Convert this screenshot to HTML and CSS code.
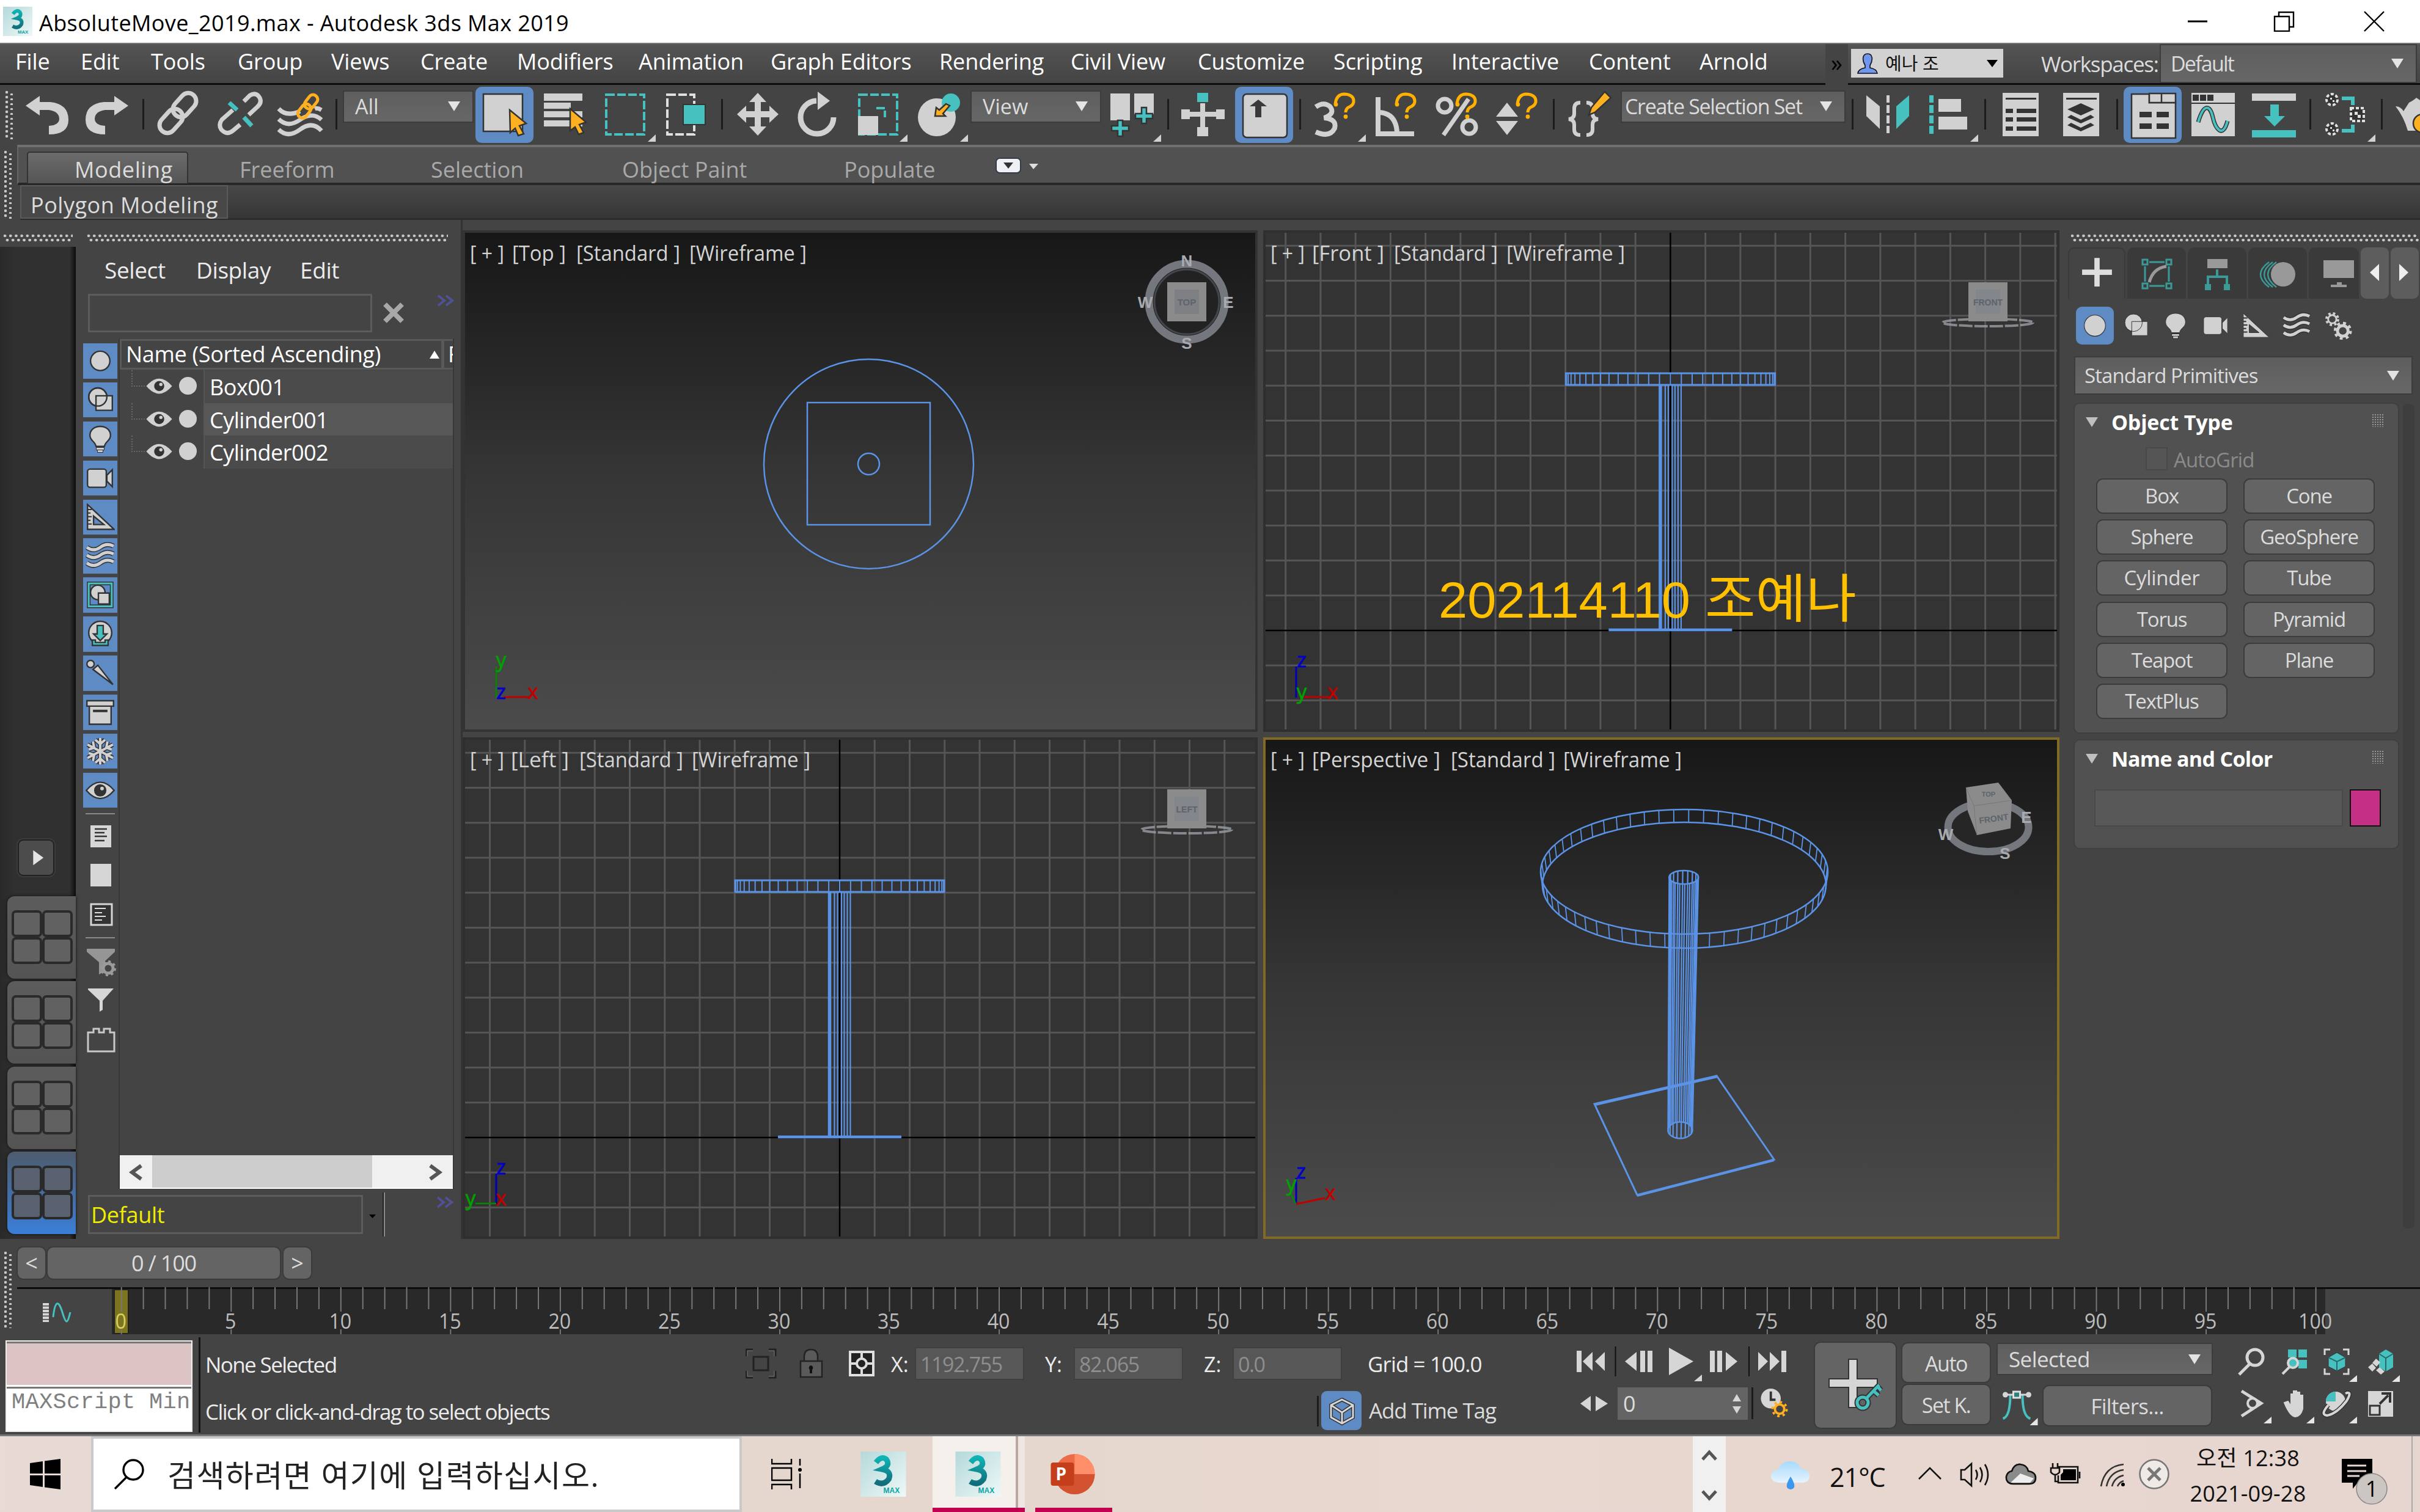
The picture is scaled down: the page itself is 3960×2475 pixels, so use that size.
FILE: index.html
```html
<!DOCTYPE html>
<html lang="ko">
<head>
<meta charset="utf-8">
<title>AbsoluteMove_2019.max - Autodesk 3ds Max 2019</title>
<link rel="stylesheet" href="styles.css">
</head>
<body>
<svg class="defs" aria-hidden="true">
  <defs>
    <linearGradient id="gTeal" x1="0" y1="0" x2="0" y2="1"><stop offset="0" stop-color="#0fb3b3"/><stop offset="1" stop-color="#126e7c"/></linearGradient>
    <linearGradient id="gTile" x1="0" y1="0" x2="1" y2="1"><stop offset="0" stop-color="#b5d9da"/><stop offset="1" stop-color="#eef8f8"/></linearGradient>
    <linearGradient id="gView" x1="0" y1="0" x2="0" y2="1"><stop offset="0" stop-color="#171717"/><stop offset=".5" stop-color="#363636"/><stop offset="1" stop-color="#4b4b4b"/></linearGradient>
    <linearGradient id="gCloud" x1="0" y1="0" x2="0" y2="1"><stop offset="0" stop-color="#a6dafd"/><stop offset="1" stop-color="#e6f4ff"/></linearGradient>
  </defs>
  <symbol id="max" viewBox="0 0 74 74"><rect width="74" height="74" fill="url(#gTile)"/><path d="M25 18Q34 6 42 13Q49 23 35 29Q51 32 46 45Q37 57 24 49" fill="none" stroke="url(#gTeal)" stroke-width="9"/><text x="37" y="68" font-family="Liberation Sans, sans-serif" font-weight="700" font-size="12" fill="#0fa3a3">MAX</text></symbol>
  <symbol id="ball" viewBox="0 0 48 48"><circle cx="24" cy="24" r="16"/></symbol>
  <symbol id="shapes" viewBox="0 0 48 48"><circle cx="20" cy="19" r="15"/><path d="M17 17h27v24h-27z"/><circle cx="20" cy="19" r="15" fill="none"/></symbol>
  <symbol id="bulb" viewBox="0 0 48 48"><path d="M24 3C13 3 7 10 7 18C7 27 16 28 17 36H31C32 28 41 27 41 18C41 10 35 3 24 3Z"/><path d="M17 39h14M19 43h10" stroke="#333" stroke-width="7"/><path d="M18 40h12M20 44h8" stroke="#d1d1d1" stroke-width="3"/></symbol>
  <symbol id="cam" viewBox="0 0 48 48"><rect x="3" y="9" width="31" height="30" rx="4"/><path d="M35 19L44 10V38L35 29Z"/></symbol>
  <symbol id="tri" viewBox="0 0 48 48"><path fill-rule="evenodd" d="M3 3L47 44H3ZM13 22V36H30Z"/><path d="M3 11h7M3 17h5M3 23h7M3 29h5M3 35h7" stroke="#333" stroke-width="2"/></symbol>
  <symbol id="waves" viewBox="0 0 48 48"><path d="M2 10Q13 18 24 10T46 8M2 23Q13 31 24 23T46 21M2 36Q13 44 24 36T46 34" fill="none" stroke="#333" stroke-width="8"/><path d="M2 10Q13 18 24 10T46 8M2 23Q13 31 24 23T46 21M2 36Q13 44 24 36T46 34" fill="none" stroke="#d1d1d1" stroke-width="5"/></symbol>
  <symbol id="group" viewBox="0 0 48 48"><path d="M5 5h38v38H5z" fill="none" stroke="#333" stroke-width="6"/><path d="M5 5h38v38H5z" fill="none" stroke="#47c1bf" stroke-width="3"/><circle cx="20" cy="20" r="12"/><path d="M21 21h18v18H21z"/></symbol>
  <symbol id="xref" viewBox="0 0 48 48"><circle cx="24" cy="22" r="19"/><path d="M19 10h10v14h6L24 35L13 24h6z" fill="#47c1bf"/><path d="M11 34v9h26v-9h-5v4H16v-4z" fill="#47c1bf"/></symbol>
  <symbol id="bone" viewBox="0 0 48 48"><circle cx="8" cy="9" r="6"/><path d="M12 18L20 11L45 43Z"/></symbol>
  <symbol id="box" viewBox="0 0 48 48"><path d="M6 13h36v31H6z"/><path d="M2 5h44v9H2z"/><path d="M12 22h24" stroke-width="4"/></symbol>
  <symbol id="flake" viewBox="0 0 48 48"><path d="M24 2V46M16 5L24 12L32 5M16 43L24 36L32 43M3 13L45 35M5 21L14 18L12 8M43 27L34 30L36 40M45 13L3 35M43 21L34 18L36 8M5 27L14 30L12 40" fill="none" stroke="#333" stroke-width="7"/><path d="M24 2V46M16 5L24 12L32 5M16 43L24 36L32 43M3 13L45 35M5 21L14 18L12 8M43 27L34 30L36 40M45 13L3 35M43 21L34 18L36 8M5 27L14 30L12 40" fill="none" stroke="#d1d1d1" stroke-width="4"/></symbol>
  <symbol id="eye" viewBox="0 0 48 48"><path d="M1 24Q24 -3 47 24Q24 51 1 24Z"/><circle cx="24" cy="24" r="9" fill="#333"/><circle cx="27" cy="21" r="3" fill="#d1d1d1" stroke="none"/></symbol>
  <symbol id="layout" viewBox="0 0 112 135"><rect x="9" y="25" width="46" height="40" rx="5"/><rect x="59" y="25" width="46" height="40" rx="5"/><rect x="9" y="69" width="46" height="40" rx="5"/><rect x="59" y="69" width="46" height="40" rx="5"/></symbol>
  <symbol id="mag" viewBox="0 0 50 50"><circle cx="32" cy="18" r="16" fill="none"/><path d="M21 30L2 49"/></symbol>
  <symbol id="q" viewBox="0 0 40 44"><path d="M3 19Q5 3 18 3Q34 4 33 16Q32 22 24 25Q20 28 20 33" fill="none" stroke="#ffb000" stroke-width="5"/><circle cx="20" cy="40" r="3.4" fill="#ffb000"/><circle cx="4" cy="20" r="3.4" fill="#ffb000"/></symbol>
</svg>

<header class="titlebar">
  <svg class="app-icon"><use href="#max"/></svg>
  <h1>AbsoluteMove_2019.max - Autodesk 3ds Max 2019</h1>
  <svg class="win-controls" viewBox="0 0 340 34" fill="none" stroke="#000" stroke-width="2.4"><path d="M2 17H34" stroke-width="3"/><path d="M144 9H168V33H144ZM151 9V2H175V26H168M291 1L323 33M323 1L291 33"/></svg>
</header>

<div class="menubar">
  <nav class="menus"><span>File</span><span>Edit</span><span>Tools</span><span>Group</span><span>Views</span><span>Create</span><span>Modifiers</span><span>Animation</span><span>Graph Editors</span><span>Rendering</span><span>Civil View</span><span>Customize</span><span>Scripting</span><span>Interactive</span><span>Content</span><span>Arnold</span></nav>
  <div class="more">»</div>
  <div class="account">
    <div class="user"><svg viewBox="0 0 34 34" class="person"><path d="M17 1C8 1 8 12 13 20L13 24Q2 26 1 33H33Q32 26 21 24L21 20C26 12 26 1 17 1Z" fill="#6f97ee" stroke="#111" stroke-width="1.6"/></svg><span>예나 조</span><i class="caret black"></i></div>
    <span class="ws-label">Workspaces:</span>
    <div class="dd workspace"><span>Default</span><i class="caret"></i></div>
  </div>
</div>

<div class="toolbar">
  <i class="grip-v"></i>
  <svg class="ic"><path d="M0 31L23 15V25H40Q70 28 70 54Q70 78 38 78V64Q55 63 55 52Q54 40 38 38H23V47Z"/></svg>
  <svg class="ic"><path d="M70 31L47 15V25H30Q0 28 0 54Q0 78 32 78V64Q15 63 15 52Q16 40 32 38H47V47Z"/></svg>
  <i class="sep"></i>
  <svg class="ic"><g class="ln"><rect x="33" y="8" width="26" height="44" rx="13" transform="rotate(42 46 30)"/><rect x="11" y="34" width="26" height="44" rx="13" transform="rotate(42 24 56)"/></g></svg>
  <svg class="ic"><g class="ln"><path d="M44 24L54 14Q64 8 70 18Q74 26 66 33L52 46M26 38L8 54Q2 62 7 70Q16 80 26 72L38 62"/><path class="teal-l" d="M20 26L33 38M44 50L57 64"/></g></svg>
  <svg class="ic"><g class="ln"><path d="M1 36Q14 50 36 40M1 53Q16 68 36 54T71 54M1 70Q16 85 36 70T71 72M60 36Q64 34 71 38"/><g class="or-l"><rect x="47" y="12" width="15" height="25" rx="7" transform="rotate(38 54 24)"/><rect x="36" y="27" width="15" height="25" rx="7" transform="rotate(38 43 39)"/></g></g></svg>
  <i class="sep"></i>
  <div class="dd"><span>All</span><i class="caret"></i></div>
  <div class="on"><svg class="ic"><rect x="13" y="12" width="64" height="61" class="ol"/><path class="or ol" d="M56 38L83 60L72 64L79 77L70 80L65 68L57 75Z"/></svg></div>
  <svg class="ic"><path d="M2 11h63v12H2zM2 26h44v10H2zM2 40h63v10H2zM2 55h63v10H2z"/><path class="or ol" d="M45 36L71 58L60 62L67 75L59 78L53 66L45 72Z"/></svg>
  <svg class="ic"><path class="teal-d" d="M2 13H64V78H2Z"/><path d="M70 90h13V78z"/></svg>
  <svg class="ic"><path class="wh-d" d="M2 13H46V78H2Z"/><path class="teal" d="M28 29h36v33H28z" stroke="#333" stroke-width="2"/></svg>
  <i class="sep"></i>
  <svg class="ic"><path d="M35 10L49 25H40V40H54V31L69 45L54 59V50H40V65H49L35 80L21 65H30V50H16V59L1 45L16 31V40H30V25H21Z"/></svg>
  <svg class="ic"><path d="M62 50A27 27 0 1 1 34 23" fill="none" stroke="#d1d1d1" stroke-width="9"/><path d="M36 8L56 23L36 38Z"/></svg>
  <svg class="ic"><path class="teal-d" d="M2 13H64V78H2Z"/><path d="M0 48h33v31H0z"/><path class="teal-d" d="M30 35H44V50" stroke-dasharray="none"/><path d="M68 90h13V78z"/></svg>
  <svg class="ic"><circle cx="32" cy="50" r="31"/><circle cx="55" cy="26" r="15" class="teal"/><path class="or ol" d="M47 28L53 31L42 44L46 48H29L31 34L36 38Z"/><path d="M70 90h13V78z"/></svg>
  <div class="dd"><span>View</span><i class="caret"></i></div>
  <svg class="ic"><path d="M1 11h32v44H1zM40 11h32v34H40z"/><path class="teal ol" d="M52 34h8v10h10v8H60v8h-8v-8H42v-8h10zM13 55h8v9h10v8H21v9h-8v-9H3v-8h10z"/><path d="M71 90h13V78z"/></svg>
  <i class="sep"></i>
  <svg class="ic"><path class="teal" d="M26 10h18v15H26z"/><path d="M31 27h8v14h18v-4h14v16H57v-4H39v17h5v15H26V66h5V49H14v4H0V37h14v4h17z"/></svg>
  <div class="on"><svg class="ic"><rect x="13" y="12" width="72" height="71" rx="6" class="ol"/><path d="M38 21L52 32H43V50H33V32H24Z" fill="#3a3a3a"/></svg></div>
  <i class="sep"></i>
  <svg class="ic"><path d="M3 33Q16 24 26 32Q36 44 17 51Q38 53 34 68Q26 84 3 74" fill="none" stroke="#d1d1d1" stroke-width="8"/><use href="#q" x="32" y="9" width="40" height="44"/><path d="M72 90h13V78z"/></svg>
  <svg class="ic"><path d="M5 17V77H64M8 42Q34 44 36 74" fill="none" stroke="#d1d1d1" stroke-width="8"/><use href="#q" x="32" y="9" width="40" height="44"/></svg>
  <svg class="ic"><g fill="none" stroke="#d1d1d1" stroke-width="7"><circle cx="15" cy="31" r="11"/><circle cx="55" cy="66" r="11"/><path d="M54 20L13 79"/></g><use href="#q" x="32" y="9" width="40" height="44"/></svg>
  <svg class="ic"><path d="M18 26L36 49H0ZM18 79L36 56H0Z"/><use href="#q" x="32" y="9" width="40" height="44"/></svg>
  <i class="sep"></i>
  <svg class="ic"><g fill="none" stroke="#d1d1d1" stroke-width="6"><path d="M20 26Q10 26 10 36V44Q10 52 1 53Q10 54 10 62V70Q10 79 20 79M30 26Q40 26 40 36V44Q40 52 49 53Q40 54 40 62V70Q40 79 30 79"/></g><path class="or ol" d="M60 8L70 18L44 42L34 46L38 34Z"/></svg>
  <div class="dd wide"><span>Create Selection Set</span><i class="caret"></i></div>
  <i class="sep"></i>
  <svg class="ic"><path d="M1 14L23 32V69L1 48Z"/><path class="teal" d="M71 14L50 32V69L71 48Z"/><path d="M34 14h5v12h-5zM34 30h5v13h-5zM34 47h5v13h-5zM34 64h5v12h-5z"/></svg>
  <svg class="ic"><path class="teal" d="M1 14h7v12H1zM1 30h7v13H1zM1 47h7v13H1zM1 64h7v13H1z"/><path d="M16 20h37v21H16zM16 49h47v21H16z"/><path d="M68 90h13V78z"/></svg>
  <i class="sep"></i>
  <svg class="ic"><rect x="1" y="10" width="59" height="71"/><path class="dk" d="M6 18h50v3H6zM6 36h12v7H6zM24 36h32v7H24zM6 50h12v7H6zM24 50h32v7H24zM6 65h12v7H6zM24 65h32v7H24z"/></svg>
  <svg class="ic"><rect x="1" y="10" width="59" height="71"/><path class="dk" d="M6 18h50v3H6zM30 27L52 37L30 47L8 37ZM8 50L14 46L30 54L46 46L52 50L30 60ZM8 63L14 59L30 67L46 59L52 63L30 73Z"/></svg>
  <i class="sep"></i>
  <div class="on"><svg class="ic"><path d="M13 12H42V26H85V84H13Z" class="ol"/><path d="M42 11H85V26H42ZM62 11V26" class="ol"/><path class="dk" d="M26 41h20v9H26zM54 41h20v9H54zM26 60h20v9H26zM54 60h20v9H54z"/></svg></div>
  <svg class="ic"><rect x="1" y="10" width="71" height="71"/><path class="dk" d="M3 13h10v10H3zM15 13h10v10H15zM27 13h10v10H27zM1 26h71v2H1z"/><path d="M12 58C22 24 32 32 36 50S52 86 60 56" fill="none" stroke="#333" stroke-width="7"/><path d="M12 58C22 24 32 32 36 50S52 86 60 56" fill="none" stroke="#47c1bf" stroke-width="4"/></svg>
  <svg class="ic"><path d="M0 11h72v12H0z"/><path class="teal" d="M30 29h14v19h10L37 65L20 48h10zM0 71h72v12H0z"/></svg>
  <i class="sep"></i>
  <svg class="ic"><g fill="#333" stroke="#e0e0e0" stroke-width="4" stroke-dasharray="5 3"><circle cx="12" cy="21" r="9"/><circle cx="12" cy="69" r="9"/><rect x="43" y="35" width="21" height="21"/></g><path d="M9 18h3v3H9zM13 22h3v3h-3zM9 66h3v3H9zM13 70h3v3h-3zM49 41h5v5h-5zM54 46h5v5h-5z" fill="#e0e0e0"/><path d="M28 19H46V30M28 72H46V62" fill="none" stroke="#47c1bf" stroke-width="6"/><path d="M70 90h13V78z"/></svg>
  <i class="sep"></i>
  <svg class="ic clip"><path d="M0 32Q8 32 13 40L22 26Q30 22 34 18L40 22V72H20Q14 50 0 32Z"/><circle cx="44" cy="60" r="15" class="or ol"/></svg>
</div>

<div class="ribbon">
  <i class="grip-v"></i>
  <div class="ribbon-body">
    <div class="tabs"><span class="active">Modeling</span><span>Freeform</span><span>Selection</span><span>Object Paint</span><span>Populate</span><svg viewBox="0 0 80 30"><rect x="1" y="1" width="40" height="24" rx="6" fill="#eef0f6" stroke="#333a48" stroke-width="2"/><path d="M13 8H29L21 18Z" fill="#333"/><path d="M55 10H70L62 19Z" fill="#ddd"/></svg></div>
    <div class="panel"><span>Polygon Modeling</span></div>
  </div>
</div>

<main class="work">
  <aside class="layouts">
    <i class="grip-h"></i>
    <div class="strip">
      <button class="play"><svg viewBox="0 0 60 60"><path d="M25 17L43 30L25 43Z" fill="#e4e4e4"/></svg></button>
      <svg class="cell"><use href="#layout"/></svg><svg class="cell"><use href="#layout"/></svg><svg class="cell"><use href="#layout"/></svg><svg class="cell current"><use href="#layout"/></svg>
    </div>
  </aside>

  <section class="explorer">
    <i class="grip-h"></i>
    <nav><span>Select</span><span>Display</span><span>Edit</span></nav>
    <div class="search"><div class="field"></div><svg class="clear" viewBox="0 0 36 36"><path d="M4 4L32 32M32 4L4 32" stroke="#a8a8a8" stroke-width="8"/></svg><svg class="chev" viewBox="0 0 28 20"><path d="M2 2L12 10L2 18M15 2L25 10L15 18"/></svg></div>
    <div class="tree">
      <div class="filters">
        <svg class="f"><use href="#ball"/></svg><svg class="f"><use href="#shapes"/></svg><svg class="f"><use href="#bulb"/></svg><svg class="f"><use href="#cam"/></svg><svg class="f"><use href="#tri"/></svg><svg class="f"><use href="#waves"/></svg><svg class="f"><use href="#group"/></svg><svg class="f"><use href="#xref"/></svg><svg class="f"><use href="#bone"/></svg><svg class="f"><use href="#box"/></svg><svg class="f"><use href="#flake"/></svg><svg class="f"><use href="#eye"/></svg>
        <svg class="extra" viewBox="0 0 56 400"><path d="M4 9H52M4 212H52" stroke="#8a8a8a" stroke-width="2"/><path d="M12 28h34v36H12zM12 91h34v37H12z" fill="#d6d6d6"/><path d="M19 34h20M19 40h16M19 46h20M19 53h16" stroke="#333" stroke-width="2.4"/><path d="M13 157h34v34H13z" fill="#333" stroke="#d6d6d6" stroke-width="3"/><path d="M19 164h18M19 171h12M19 177h18M19 183h12" stroke="#ddd" stroke-width="2"/><path d="M6 230H52V235L34 252V268L26 272V252L6 235Z" fill="#959595"/><circle cx="41" cy="262" r="8" fill="#444" stroke="#9a9a9a" stroke-width="5"/><circle cx="41" cy="262" r="11" fill="none" stroke="#9a9a9a" stroke-width="4" stroke-dasharray="4 4.6"/><path d="M8 295H50L32 315V330L27 333V315L8 297Z" fill="#d6d6d6"/><path d="M8 398V367H17V361H26V367H34V361H44V367H51V398Z" fill="none" stroke="#c8c8c8" stroke-width="3"/></svg>
      </div>
      <div class="list">
        <div class="head"><span>Name (Sorted Ascending)</span><b></b><em>F</em></div>
        <div class="row"><i></i><svg class="eye"><use href="#eye"/></svg><u></u><span>Box001</span></div>
        <div class="row alt"><i></i><svg class="eye"><use href="#eye"/></svg><u></u><span>Cylinder001</span></div>
        <div class="row"><i></i><svg class="eye"><use href="#eye"/></svg><u></u><span>Cylinder002</span></div>
        <div class="hscroll"><svg viewBox="0 0 53 54"><path d="M35 17L20 28L35 39" /></svg><div></div><svg viewBox="0 0 53 54"><path d="M16 17L31 28L16 39"/></svg></div>
      </div>
    </div>
    <div class="preset"><div class="field">Default</div><svg viewBox="0 0 148 72"><path d="M10 36H21L15.500 42Z" fill="#000"/><path d="M35 0V72" stroke="#8a8a8a" stroke-width="2"/><path d="M33 0V72" stroke="#222" stroke-width="2"/><g fill="none" stroke="#4f5192" stroke-width="4"><path d="M122 8L132 16L122 24M135 8L145 16L135 24"/></g></svg></div>
  </section>

  <section class="views">
    <svg id="vTop" viewBox="757 377 1303 821"></svg>
    <svg id="vFront" viewBox="2067 377 1303 821"></svg>
    <svg id="vLeft" viewBox="757 1207 1303 821"></svg>
    <svg id="vPersp" viewBox="2067 1207 1303 821"></svg>
  </section>

  <aside class="command">
    <i class="grip-h"></i>
    <div class="ctabs">
      <svg viewBox="0 0 94 84" class="active"><path d="M43 15h9v20h21v9H52v20h-9V44H22v-9h21z" fill="#dedede"/></svg>
      <svg viewBox="0 0 96 84"><g fill="none" stroke="#3b9a98" stroke-width="3"><path d="M25 20h8v8h-8zM64 20h8v8h-8zM25 59h8v8h-8zM64 59h8v8h-8zM36 24H61M36 63H61M29 31V56M68 31V56"/></g><path d="M36 57Q42 34 64 31" fill="none" stroke="#999" stroke-width="5"/></svg>
      <svg viewBox="0 0 96 84"><path d="M32 19h33v15H32z" fill="#999"/><path d="M28 60h10v10H28zM59 60h10v10H59z" fill="#3b9a98" /><path d="M48 36V46M33 60V48H64V60" fill="none" stroke="#3b9a98" stroke-width="4"/></svg>
      <svg viewBox="0 0 96 84"><g fill="none" stroke="#3b9a98" stroke-width="2.500"><path d="M34 24Q6 44 34 65M40 24Q12 44 40 65M46 24Q18 44 46 65"/></g><circle cx="57" cy="44" r="20" fill="#999"/></svg>
      <svg viewBox="0 0 82 84"><path d="M24 21h50v29H24zM46 57h8v4h8v4H36v-4h10z" fill="#999"/></svg>
      <svg viewBox="0 0 46 84" class="arr"><path d="M30 27V55L15 41Z" fill="#eee"/></svg>
      <svg viewBox="0 0 46 84" class="arr"><path d="M14 27V55L29 41Z" fill="#eee"/></svg>
    </div>
    <div class="cats"><svg class="on"><use href="#ball"/></svg><svg><use href="#shapes"/></svg><svg><use href="#bulb"/></svg><svg><use href="#cam"/></svg><svg><use href="#tri"/></svg><svg><use href="#waves"/></svg><svg viewBox="0 0 48 48"><g fill="none" stroke="#d1d1d1"><circle cx="14" cy="13" r="7" stroke-width="3"/><circle cx="14" cy="13" r="10" stroke-width="4" stroke-dasharray="4 4"/><circle cx="32" cy="33" r="9" stroke-width="5"/><circle cx="32" cy="33" r="13" stroke-width="5" stroke-dasharray="5 5.200"/></g></svg></div>
    <div class="dd prim"><span>Standard Primitives</span><i class="caret"></i></div>
    <div class="rollouts">
      <div class="stack">
        <div class="rollout">
          <h2><i class="caret"></i>Object Type<b></b></h2>
          <label><i></i>AutoGrid</label>
          <div class="prims"><button>Box</button><button>Cone</button><button>Sphere</button><button>GeoSphere</button><button class="loose">Cylinder</button><button>Tube</button><button>Torus</button><button>Pyramid</button><button>Teapot</button><button>Plane</button><button>TextPlus</button></div>
        </div>
        <div class="rollout second">
          <h2><i class="caret"></i>Name and Color<b></b></h2>
          <div class="name-row"><div></div><i></i></div>
        </div>
      </div>
      <div class="vbar"></div>
    </div>
  </aside>
</main>

<section class="time">
  <i class="grip-v"></i>
  <div class="time-body">
    <div class="slider"><button>&lt;</button><button class="knob">0 / 100</button><button>&gt;</button></div>
    <div class="track">
      <svg class="curve" viewBox="0 0 155 76"><path d="M47 23V54" stroke="#d6d6d6" stroke-width="10" stroke-dasharray="4 1.500"/><path d="M59 46C62 18 68 18 74 38S82 58 87 38" fill="none" stroke="#47c1bf" stroke-width="3"/></svg>
      <svg id="ticks" viewBox="183 2107 3777 77"></svg>
    </div>
  </div>
</section>

<footer class="status">
  <div class="script"><div class="pink"></div><div class="white">MAXScript Mini</div></div>
  <div class="msgs"><p>None Selected</p><p>Click or click-and-drag to select objects</p></div>
  <div class="coords">
    <div class="crow">
      <svg viewBox="0 0 230 50"><g fill="none" stroke="#222" stroke-width="3"><path d="M13 14h24v22H13z"/><path d="M1 13V2H12M38 2H49V13M49 37V48H38M12 48H1V37"/></g><g fill="none" stroke="#777" stroke-width="1"><path d="M3 13V4H12M38 4H47V13M47 37V46H38M12 46H3V37"/></g><path d="M96 20V12Q97 2 107 2Q117 2 118 12V20M90 21h35v26H90z" fill="#5a5a5a" stroke="#222" stroke-width="2.500"/><path d="M107 28a4 4 0 0 1 2 7v6h-4v-6a4 4 0 0 1 2-7" fill="#111"/><path d="M171 6h38v38h-38z" fill="#222" stroke="#e0e0e0" stroke-width="4"/><path d="M190 6V44M171 25H209" stroke="#ddd" stroke-width="4"/><circle cx="190" cy="25" r="8" fill="#222" stroke="#ddd" stroke-width="4"/></svg>
      <label>X:</label><div>1192.755</div><label>Y:</label><div>82.065</div><label>Z:</label><div>0.0</div><p>Grid = 100.0</p>
    </div>
    <div class="trow"><i class="sep"></i><svg viewBox="0 0 66 64"><rect width="66" height="64" rx="9" fill="#5f8bc4"/><g fill="none" stroke="#333" stroke-width="6"><path d="M34 14L52 23V43L34 53L16 43V23ZM16 23L34 35L52 23M34 35V53"/></g><g fill="none" stroke="#d6d6d6" stroke-width="3"><path d="M34 14L52 23V43L34 53L16 43V23ZM16 23L34 35L52 23M34 35V53"/></g></svg><span>Add Time Tag</span></div>
  </div>
  <div class="player">
    <svg viewBox="2575 2195 380 70"><g fill="#d6d6d6"><path d="M2580 2212h8v35h-8zM2606 2214v31l-16-15.500zM2626 2214v31l-16-15.500zM2678 2214v31l-19-15.500zM2684 2212h8v35h-8zM2696 2212h8v35h-8zM2731 2207V2252L2771 2229.500ZM2772 2262h13v-11zM2798 2212h8v35h-8zM2810 2212h8v35h-8zM2824 2214v31l19-15.500zM2877 2214v31l16-15.500zM2896 2214v31l16-15.500zM2915 2212h8v35h-8z"/></g><path d="M2643.500 2205V2254M2862 2205V2254" stroke="#111" stroke-width="2"/></svg>
    <div class="frame"><svg viewBox="0 0 66 52"><path d="M22 14V39L5 26.500ZM30 14V39L50 26.500Z" fill="#d6d6d6"/><path d="M68 2V50" stroke="#111" stroke-width="2"/></svg><div>0<svg viewBox="0 0 16 34"><path d="M8 1L15 13H1ZM8 33L15 21H1Z" fill="#d6d6d6"/></svg></div><svg class="clock" viewBox="0 0 70 52"><circle cx="30" cy="18" r="17" fill="#d6d6d6"/><path d="M30 6V20H38" fill="none" stroke="#333" stroke-width="4"/><circle cx="45" cy="36" r="8" fill="#444" stroke="#ffb020" stroke-width="4"/><circle cx="45" cy="36" r="12" fill="none" stroke="#ffb020" stroke-width="4" stroke-dasharray="4 5.400"/></svg></div>
  </div>
  <button class="bigkey"><svg viewBox="0 0 132 139"><path d="M55 27h14v32h33v14H69v33H55V73H23V59h32z" fill="#d6d6d6" stroke="#333" stroke-width="2"/><g fill="none" stroke="#333" stroke-width="9"><circle cx="78" cy="98" r="9"/><path d="M84 91L105 69M96 79L104 86M102 71L108 78"/></g><g fill="none" stroke="#47c1bf" stroke-width="5"><circle cx="78" cy="98" r="9"/><path d="M84 91L105 69M96 79L104 86M102 71L108 78"/></g></svg></button>
  <div class="keys"><button>Auto</button><button>Set K.</button></div>
  <div class="filt"><div class="dd"><span>Selected</span><i class="caret"></i></div><div class="filt-row"><svg viewBox="0 0 76 64"><path d="M10 53Q22 50 22 14M55 53Q42 50 42 14" fill="none" stroke="#47c1bf" stroke-width="4"/><path d="M14 14H52" stroke="#d6d6d6" stroke-width="3"/><circle cx="14" cy="14" r="4.500" fill="#d6d6d6"/><circle cx="52" cy="14" r="4.500" fill="#d6d6d6"/><rect x="27" y="9" width="11" height="10" fill="#2b7f7d" stroke="#e0e0e0" stroke-width="3"/><path d="M54 64h13V52z" fill="#e6e6e6"/></svg><button>Filters...</button></div></div>
  <svg class="nav" viewBox="3655 2195 290 145"><g fill="none" stroke="#d6d6d6" stroke-width="5"><circle cx="3690" cy="2222" r="13"/><path d="M3681 2233L3664 2250"/></g><path d="M3744 2209h14v13h-14zM3761 2209h14v13h-14zM3761 2226h14v14h-14z" fill="#47c1bf"/><circle cx="3752" cy="2231" r="8" fill="#47c1bf" stroke="#d6d6d6" stroke-width="4"/><path d="M3746 2238L3735 2249" stroke="#d6d6d6" stroke-width="4"/><path d="M3804 2218V2209H3813M3834 2209H3843V2218M3843 2240V2249H3834M3813 2249H3804V2240" fill="none" stroke="#d6d6d6" stroke-width="3"/><path d="M3824 2214L3838 2222V2237L3824 2244L3810 2237V2222Z" fill="#47c1bf" stroke="#333"/><path d="M3810 2222L3824 2229L3838 2222M3824 2229V2244" fill="none" stroke="#256a69" stroke-width="2"/><path d="M3904 2209L3916 2216V2238L3904 2245L3893 2238V2216Z" fill="#47c1bf"/><path d="M3893 2216L3904 2223L3916 2216M3904 2223V2245" fill="none" stroke="#256a69" stroke-width="2"/><path d="M3888 2224l7 6-6 7-7-6zM3882 2232l6 7-6 6-7-7zM3894 2238l8 7-6 5-8-7z" fill="#d6d6d6"/><g fill="#e6e6e6"><path d="M3844 2262h13v-11zM3914 2262h13v-11zM3704 2330h13v-11zM3774 2330h13v-11zM3844 2330h13v-11z"/></g><path d="M3668 2277L3700 2297L3668 2318" fill="none" stroke="#d6d6d6" stroke-width="5"/><circle cx="3686" cy="2297" r="8" fill="#444" stroke="#d6d6d6" stroke-width="4"/><path d="M3738 2296L3744 2294L3749 2302V2282H3753V2297V2277H3758V2297V2279H3763V2298V2284H3768V2306Q3765 2318 3756 2319Q3747 2318 3738 2296Z" fill="#d6d6d6" stroke="#d6d6d6" stroke-width="2"/><circle cx="3822" cy="2294" r="16" fill="#d6d6d6"/><path d="M3822 2294V2278A16 16 0 0 0 3806 2294Z" fill="#47c1bf"/><path d="M3838 2281Q3850 2276 3840 2293Q3824 2314 3808 2317Q3796 2316 3810 2300" fill="none" stroke="#333" stroke-width="7"/><path d="M3838 2281Q3850 2276 3840 2293Q3824 2314 3808 2317Q3796 2316 3810 2300" fill="none" stroke="#d6d6d6" stroke-width="4"/><path d="M3875 2277h41v42h-41z" fill="#d6d6d6"/><path d="M3878 2301h16v15h-16z" fill="#d6d6d6" stroke="#333" stroke-width="3"/><path d="M3894 2298L3908 2284M3897 2281H3911V2296" fill="none" stroke="#333" stroke-width="4"/></svg>
</footer>

<div class="taskbar">
  <svg class="start" viewBox="0 0 50 50"><path d="M0 7L21 4V24H0ZM24 3.500L50 0V24H24ZM0 27H21V46L0 43ZM24 27H50V50L24 46.500Z"/></svg>
  <div class="find"><svg><use href="#mag"/></svg><span>검색하려면 여기에 입력하십시오.</span></div>
  <svg class="tv" viewBox="0 0 50 50" fill="none" stroke="#000" stroke-width="2.500"><path d="M1 15H33V35H1ZM1 0V8H33V0M1 50V42H33V50M47 0V11M47 24V48"/><circle cx="47" cy="18" r="3" fill="#000" stroke="none"/></svg>
  <svg class="t1"><use href="#max"/></svg>
  <div class="task active"><svg><use href="#max"/></svg></div>
  <div class="task ppt"><svg viewBox="0 0 74 74"><circle cx="40" cy="37" r="33" fill="#ed6c47"/><path d="M40 4A33 33 0 0 1 73 37H40Z" fill="#ff8f6b"/><path d="M73 37A33 33 0 0 1 7 37Z" fill="#d35230"/><rect x="1" y="18" width="38" height="38" rx="4" fill="#c43e1c"/><text x="9" y="47" font-family="Open Sans, sans-serif" font-weight="700" font-size="28" fill="#fff">P</text></svg></div>
  <svg class="updown" viewBox="0 0 54 124" fill="none" stroke="#555" stroke-width="5"><path d="M16 38L27 26L38 38M16 90L27 102L38 90"/></svg>
  <svg class="wx" viewBox="0 0 66 50"><path d="M14 36Q0 34 1 24Q2 16 12 15Q18 1 32 1Q45 1 50 13Q64 14 64 25Q64 36 50 36Z" fill="url(#gCloud)"/><path d="M33 26Q42 40 38 45Q33 49 28 45Q24 40 33 26Z" fill="#3d97ee"/></svg>
  <span class="temp">21°C</span>
  <svg class="tray" viewBox="3130 2380 430 66" fill="none" stroke="#111" stroke-width="2.600"><path d="M3140 2421L3158 2403L3176 2421"/><path d="M3209 2406H3215L3226 2396V2432L3215 2422H3209ZM3233 2406Q3238 2414 3233 2422M3240 2402Q3247 2414 3240 2426M3248 2397Q3258 2414 3248 2431"/><path d="M3294 2429Q3282 2428 3283 2417Q3285 2409 3292 2408Q3296 2396 3306 2397Q3317 2398 3319 2408Q3331 2410 3331 2419Q3331 2429 3320 2429Z" fill="#8a8a8a"/><path d="M3290 2427L3306 2412L3328 2420L3322 2427Z" fill="#eee" stroke="none"/><path d="M3368 2401H3400V2427H3368V2415M3403 2409V2420"/><path d="M3376 2405H3397V2423H3372V2414L3376 2410Z" fill="#000" stroke="none"/><path d="M3359 2395V2403M3367 2395V2403M3356 2403H3370V2410Q3363 2418 3356 2410ZM3363 2414V2425H3367" fill="#e6d6cf"/><path d="M3438 2433Q3444 2400 3475 2397M3447 2433Q3452 2409 3475 2406M3456 2433Q3460 2418 3475 2415M3465 2433Q3468 2426 3475 2424" stroke="#333"/><circle cx="3474" cy="2430" r="3" fill="#000" stroke="none"/><circle cx="3525" cy="2413" r="23.500" fill="#f0eae6" stroke="#777"/><path d="M3515 2403L3535 2423M3535 2403L3515 2423" stroke="#777" stroke-width="5"/></svg>
  <div class="clock-text"><span>오전 12:38</span><span>2021-09-28</span></div>
  <svg class="notif" viewBox="3825 2351 135 124"><path d="M3832 2388H3882V2427H3858L3850 2437V2427H3832Z" fill="#000"/><path d="M3841 2399H3872M3841 2408H3872M3841 2416H3861" stroke="#e6d8d0" stroke-width="3"/><circle cx="3881" cy="2437" r="25" fill="#ccc6c3" stroke="#888" stroke-width="1.500"/><text x="3881" y="2450" text-anchor="middle" font-family="Open Sans, sans-serif" font-size="36" fill="#000">1</text><path d="M3947 2351V2475" stroke="#aaa" stroke-width="2"/></svg>
</div>
<script src="scene.js"></script>
</body>
</html>
```
FILE: styles.css
```css
* { box-sizing: border-box; }
html, body { margin: 0; }
body { width: 3960px; height: 2475px; overflow: hidden; background: #444; color: #ececec; font: 36px/1 "Open Sans", "Noto Sans CJK KR", sans-serif; display: flex; flex-direction: column; }
p, h1, h2 { margin: 0; font-weight: 400; }
svg { display: block; flex: none; }
button { border: 0; padding: 0; font: inherit; color: #dcdcdc; background: #646464; border-radius: 9px; box-shadow: 0 0 0 2px #3b3b3b; }
span, label, button, p { white-space: nowrap; }
.defs { width: 0; height: 0; position: absolute; }

.caret { width: 0; height: 0; flex: none; border: 10px solid transparent; border-top: 16px solid #e4e4e4; border-bottom: 0; }
.caret.black { border-top: 12px solid #000; border-width: 12px 9px 0; }
.dd { display: flex; align-items: center; justify-content: space-between; background: linear-gradient(#5e5e5e, #676767); color: #dcdcdc; border: 2px solid #3c3c3c; }
.grip-v { width: 15px; background: radial-gradient(circle at 3px 3px, #c8c8c8 2px, transparent 2.600px) 0 0 / 15px 8px, radial-gradient(circle at 11px 7px, #c8c8c8 2px, transparent 2.600px) 0 0 / 15px 8px; }
.grip-h { height: 14px; background: radial-gradient(circle at 3px 3px, #c8c8c8 2px, transparent 2.600px) 0 0 / 9.200px 14px, radial-gradient(circle at 7px 10px, #c8c8c8 2px, transparent 2.600px) 0 0 / 9.200px 14px; }

.titlebar { height: 70px; flex: none; background: #fff; display: flex; align-items: center; padding-left: 5px; color: #000; }
.app-icon { width: 48px; height: 50px; }
.titlebar h1 { font-size: 36px; margin-left: 11px; flex: 1; line-height: 70px; padding-top: 6px; letter-spacing: .4px; }
.win-controls { width: 340px; height: 34px; margin-right: 42px; }

.menubar { height: 69px; flex: none; display: flex; border-top: 2px solid #777; }
.menus { width: 2987px; padding-left: 25px; display: grid; grid-template-columns: 107px 115px 142px 153px 146px 158px 199px 216px 276px 215px 208px 222px 193px 225px 181px 120px; background: linear-gradient(#545454, #444); border-bottom: 3px solid #0d0d0d; line-height: 58px; color: #fff; letter-spacing: -.1px; }
.more { width: 37px; text-align: center; color: #000; font-size: 38px; line-height: 60px; }
.account { flex: 1; display: flex; background: linear-gradient(#545454, #444); border-bottom: 3px solid #0d0d0d; }
.user { width: 249px; height: 47px; margin: 8px 0 0 5px; background: #d2d2d2; color: #111; display: flex; align-items: center; padding: 0 9px 0 10px; font-size: 29px; }
.person { width: 34px; height: 34px; margin-right: 12px; }
.user span { flex: 1; }
.ws-label { width: 194px; margin-left: 62px; line-height: 66px; color: #dcdcdc; font-size: 35px; letter-spacing: -1.300px; }
.workspace { width: 421px; height: 64px; padding: 0 20px 0 16px; font-size: 34px; letter-spacing: -1.800px; }

.toolbar { height: 98px; flex: none; padding: 3px 0 0 8px; display: grid; grid-template-columns: 34px 98px 93px 23px 99px 100px 94px 12px 217px 110px 102px 100px 90px 25px 97px 102px 97px 87px 228px 94px 23px 88px 105px 24px 100px 99px 99px 93px 25px 86px 378px 23px 103px 91px 29px 99px 88px 12px 110px 100px 94px 25px 92px 24px 40px; align-items: start; }
.toolbar .grip-v { height: 80px; margin-top: 6px; }
.toolbar .ic { width: 84px; height: 92px; overflow: visible; fill: #d1d1d1; }
.toolbar .ic.clip { width: 40px; overflow: hidden; }
.sep { width: 3px; height: 50px; margin-top: 20px; background: #1c1c1c; }
.toolbar .dd { height: 53px; width: 214px; margin-top: 6px; padding: 0 20px 2px 18px; font-size: 34px; }
.toolbar .dd.wide { width: 368px; padding-left: 5px; letter-spacing: -1.300px; }
.on { background: #5f8bc4; border-radius: 10px; width: 95px; height: 92px; }
.ol { stroke: #333; stroke-width: 2.500; }
.ln { fill: none; stroke: #d1d1d1; stroke-width: 7; }
.teal { fill: #47c1bf; } .or { fill: #ffb020; } .dk { fill: #333; }
.teal-l { stroke: #47c1bf; } .or-l { stroke: #ffb020; stroke-width: 5; }
.teal-d, .wh-d { fill: none; stroke: #47c1bf; stroke-width: 4; stroke-dasharray: 14 4; }
.wh-d { stroke: #e0e0e0; }

.ribbon { height: 123px; flex: none; display: flex; padding-left: 6px; }
.ribbon .grip-v { height: 112px; margin: 9px 7px 0 0; }
.ribbon-body { flex: 1; }
.tabs { height: 66px; display: flex; background: #515151; border-top: 4px solid #6f6f6f; border-bottom: 4px solid #272727; color: #a9a9a9; line-height: 73px; padding: 0 0 0 16px; border-left: 2px solid #666; }
.tabs span { width: 313px; }
.tabs .active { width: 264px; height: 52px; margin: 7px 84px 0 -2px; padding-left: 76px; line-height: 56px; border: 2px solid #333; border-bottom: 0; border-radius: 5px 5px 0 0; background: linear-gradient(#6b6b6b, #555); color: #dcdcdc; letter-spacing: .6px; }
.tabs span:nth-child(4) { width: 363px; }
.tabs span:nth-child(5) { width: 248px; }
.tabs svg { width: 80px; height: 30px; margin-top: 17px; }
.panel { height: 57px; margin-left: 5px; background: linear-gradient(#484848, #363636); border-bottom: 3px solid #2c2c2c; }
.panel span { display: block; width: 340px; height: 55px; border: 2px solid #5a5a5a; background: #484848; line-height: 62px; padding-left: 15px; color: #dcdcdc; letter-spacing: .5px; }

.work { height: 1668px; flex: none; display: flex; }
.layouts { width: 124px; padding-top: 23px; flex: none; }
.layouts .grip-h { display: block; margin: 0 5px 7px; }
.strip { height: 1624px; display: flex; flex-direction: column; padding: 970px 0 0 12px; gap: 4.500px; background: linear-gradient(90deg, #292929, #303030 20%, #303030 92%, #0c0c0c); }
.play { width: 60px; height: 60px; margin: 0 0 28px 17px; background: #4c4c4c; border: 2px solid #222; }
.play svg { width: 56px; height: 56px; }
.cell { width: 112px; height: 135px; background: linear-gradient(#5c5c5c, #545454); border-radius: 12px 0 0 12px; fill: #616161; stroke: #2a2a2a; stroke-width: 4; box-shadow: 0 0 5px #111; }
.current { background: linear-gradient(#4e5b6c, #3a7ed8); fill: #596170; }

.explorer { width: 633px; flex: none; padding: 23px 11px 0 12px; border-right: 3px solid #333; }
.explorer .grip-h { display: block; margin: 0 10px 0 6px; }
.explorer nav { display: flex; height: 84px; padding-left: 35px; line-height: 90px; font-size: 37px; letter-spacing: -.4px; }
.explorer nav span:nth-child(1) { width: 150px; } .explorer nav span:nth-child(2) { width: 170px; }
.search { display: flex; height: 73px; padding-left: 8px; }
.search .field { width: 466px; height: 63px; border: 3px solid #5c5c5c; }
.clear { width: 36px; height: 36px; margin: 13px 0 0 17px; }
.chev { width: 28px; height: 20px; margin: 1px 0 0 53px; fill: none; stroke: #4f5192; stroke-width: 4; }
.tree { display: flex; height: 1392px; }
.filters { width: 61px; padding-top: 8px; }
.f { width: 56px; height: 57.500px; padding: 5px 4px; margin-bottom: 6.400px; background: #5f8bc4; fill: #d1d1d1; stroke: #333; stroke-width: 2.400; }
.extra { width: 56px; height: 400px; margin-top: -6px; }
.list { flex: 1; border-left: 2px solid #383838; border-right: 2px solid #383838; display: flex; flex-direction: column; }
.head { height: 50px; margin: 1px 0 1px; display: flex; border: 3px solid #595959; border-right: 0; color: #fff; line-height: 44px; padding-left: 7px; align-items: center; }
.head span { flex: 1; letter-spacing: -.3px; }
.head b { border: 8px solid transparent; border-top: 0; border-bottom: 13px solid #fff; }
.head em { font-style: normal; width: 19px; margin-left: 3px; padding-left: 6px; border-left: 5px solid #595959; overflow: hidden; }
.row { height: 53.500px; display: flex; color: #fff; letter-spacing: -.5px; }
.row i { width: 22px; margin-left: 19px; border-left: 2px dotted #666; border-bottom: 2px dotted #666; height: 27px; }
.row svg { width: 45px; height: 44px; margin: 4px 0 0 1px; fill: #d1d1d1; }
.row u { width: 29px; height: 29px; border-radius: 50%; background: #d1d1d1; margin: 11px 11px 0 10px; }
.row span { flex: 1; background: #4b4b4b; border-left: 2px solid #555; padding-left: 8px; line-height: 55px; }
.row.alt span { background: #575757; }
.hscroll { margin-top: auto; height: 55px; background: #f0f0f0; display: flex; border-bottom: 2px solid #fff; }
.hscroll svg { width: 53px; height: 54px; fill: none; stroke: #555; stroke-width: 6; }
.hscroll div { width: 360px; background: #cdcdcd; margin-right: 79px; }
.preset { display: flex; padding: 6px 0 0 8px; }
.preset .field { width: 450px; height: 64px; margin-top: 4px; border: 3px solid #5c5c5c; color: #f0ee00; line-height: 60px; padding-left: 2px; letter-spacing: -.3px; }
.preset svg { width: 148px; height: 72px; }

.views { width: 2613px; padding-top: 17px; display: grid; grid-template-columns: 1303px 1303px; grid-template-rows: 821px 821px; gap: 9px 7px; height: 1668px; flex: none; }
.views svg { width: 1303px; height: 821px; }
.views text { font-family: "Open Sans", "Noto Sans CJK KR", sans-serif; }

.command { width: 590px; padding: 23px 2px 0 14px; flex: none; }
.command .grip-h { display: block; margin-left: 4px; }
.ctabs { display: grid; grid-template-columns: 94px 96px 96px 96px 82px 46px 46px; gap: 3px; margin-top: 8px; height: 84px; }
.ctabs svg { height: 84px; width: 100%; background: #3a3a3a; border-radius: 10px 10px 0 0; }
.ctabs .active { background: #444; border: 2px solid #3a3a3a; border-bottom: 0; }
.ctabs .arr { background: #5d5d5d; border-radius: 9px; }
.cats { display: grid; grid-template-columns: 55px 46px 46px 46px 47px 49px 46px; gap: 0 19.500px; padding: 13px 0 0 13px; height: 94px; fill: #d1d1d1; stroke: #333; stroke-width: 1; align-items: start; }
.cats svg { width: 46px; height: 46px; margin-top: 8px; }
.cats .on { width: 62px; height: 62px; margin: 0; padding: 5px; }
.command .dd { width: 554px; height: 63px; margin-left: 10px; padding: 0 20px 0 15px; font-size: 33px; letter-spacing: -.9px; }
.rollouts { display: flex; padding: 15px 0 0 11px; }
.stack { width: 529px; }
.rollout { height: 538px; background: #515151; border-radius: 8px; box-shadow: 0 0 0 2px #3f3f3f; }
.rollout.second { height: 176px; margin-top: 13px; }
.rollout h2 { height: 71px; display: flex; padding: 12px 22px 0 18px; font-weight: 700; font-size: 34px; color: #fff; line-height: 36px; letter-spacing: -.2px; }
.rollout.second h2 { letter-spacing: -.7px; }
.rollout h2 .caret { margin: 10px 22px 0 0; border-top-color: #c0c0c0; }
.rollout h2 b { width: 20px; height: 21px; margin: 5px 0 0 auto; background: repeating-linear-gradient(90deg, transparent 0 2px, #515151 2px 4px), repeating-linear-gradient(#999 0 2px, #515151 2px 4px); }
.rollout label { display: flex; height: 53px; margin-left: 116px; color: #8b8b8b; line-height: 42px; gap: 10px; font-size: 33px; letter-spacing: -.9px; }
.rollout label i { width: 36px; height: 38px; border: 2px solid #494949; background: #555; }
.prims { display: grid; grid-template-columns: 211px 211px; gap: 13.200px 30px; grid-auto-rows: 54px; padding-left: 37px; }
.prims button { line-height: 54px; font-size: 33px; letter-spacing: -1.200px; }
.prims .loose { letter-spacing: -.3px; }
.name-row { display: flex; gap: 11px; padding: 9px 0 0 32px; }
.name-row div { width: 407px; height: 61px; border: 2px solid #494949; background: #585858; }
.name-row i { width: 51px; height: 61px; border: 2px solid #111; background: #c43084; }
.vbar { width: 19px; height: 1350px; margin-left: 8px; background: #3e3e3e; border-radius: 8px; }

.time { height: 156px; display: flex; padding-left: 6px; flex: none; }
.time .grip-v { height: 126px; margin: 20px 7px 0 0; }
.time-body { flex: 1; }
.slider { height: 79px; padding-top: 14px; display: flex; gap: 5px; }
.slider button { width: 45px; height: 51px; margin-left: 1px; line-height: 51px; }
.slider .knob { width: 380px; margin: 0 0 0 -1px; letter-spacing: -1.200px; }
.track { display: flex; height: 77px; border-top: 3px solid #0d0d0d; }
.curve { width: 155px; height: 76px; }
#ticks { width: 3777px; height: 77px; margin-top: -3px; }

.status { height: 167px; flex: none; display: grid; grid-template-columns: 325px 895px 1355px 395px 143px 143px 399px 290px; align-items: start; border-bottom: 3px solid #777; }
.script { margin: 10px 0 0 9px; width: 306px; border: 2px solid #eee; height: 150px; }
.pink { height: 71px; background: #dcc3c4; border-top: 3px solid #777; }
.white { height: 72px; margin-top: 3px; background: #fff; border-top: 3px solid #777; box-shadow: 0 -3px #fff; color: #808080; font: 37px/44px "Liberation Mono", monospace; padding-left: 8px; overflow: hidden; letter-spacing: .3px; white-space: nowrap; }
.msgs { border-left: 3px solid #111; height: 156px; margin-top: 5px; padding: 21px 0 0 8px; }
.msgs p { height: 77px; line-height: 48px; font-size: 35px; letter-spacing: -1.600px; }
.crow { display: flex; padding-top: 21px; color: #ececec; line-height: 56px; }
.crow svg { width: 230px; height: 50px; margin-top: 2px; }
.crow label { width: 47px; margin-left: 34px; font-size: 34px; }
.crow label:first-of-type { margin-left: 8px; width: 39px; }
.crow div { width: 179px; height: 54px; background: #575757; border: 2px solid #3f3f3f; color: #8e8e8e; padding-left: 7px; line-height: 52px; font-size: 34px; letter-spacing: -1.400px; }
.crow p { margin-left: 42px; font-size: 35px; letter-spacing: -.9px; }
.trow { display: flex; padding: 16px 0 0 935px; line-height: 64px; color: #dcdcdc; font-size: 35px; letter-spacing: -1.100px; }
.trow .sep { margin-top: 8px; } .trow svg { width: 66px; height: 64px; margin: 0 12px 0 4px; }
.player > svg { width: 380px; height: 70px; margin-top: 10px; }
.frame { display: flex; margin-top: 7px; }
.frame > svg { width: 66px; height: 52px; overflow: visible; margin-left: 6px; margin-right: 0; }
.frame > div { width: 213px; height: 53px; background: #646464; line-height: 54px; padding: 0 10px 0 9px; display: flex; justify-content: space-between; color: #dcdcdc; align-items: center; }
.frame > div svg { width: 16px; height: 34px; }
.frame > .clock { width: 70px; margin-left: 6px; border-left: 3px solid #1c1c1c; }
.bigkey { width: 132px; height: 139px; margin-top: 14px; }
.bigkey svg { width: 132px; height: 139px; }
.keys { display: grid; grid-template-rows: 63px 64px; gap: 5px; margin-top: 15px; }
.keys button { width: 143px; padding-top: 2px; font-size: 34px; letter-spacing: -1.500px; }
.filt { padding: 14px 0 0 11px; }
.filt .dd { width: 354px; height: 53px; padding: 0 18px; font-size: 35px; letter-spacing: -.6px; }
.filt-row { display: flex; margin-top: 18px; }
.filt-row svg { width: 77px; height: 64px; }
.filt-row button { width: 274px; height: 64px; font-size: 35px; letter-spacing: -.7px; }
.nav { width: 290px; height: 145px; margin-top: 11px; }

.taskbar { height: 124px; flex: none; display: flex; align-items: flex-start; background: linear-gradient(90deg, #e8dad4, #e5d7cd 30%, #e8d8d0 60%, #e6d6cf); color: #111; }
.start { width: 50px; height: 50px; margin: 37px 50px 0 49px; }
.find { width: 1065px; height: 124px; background: #fff; border: 4px solid #c9c9c9; display: flex; align-items: center; padding: 0 0 0 33px; font-size: 50px; color: #222; }
.find svg { width: 50px; height: 50px; stroke: #000; stroke-width: 3.400; margin-right: 38px; }
.find span { letter-spacing: 1.400px; padding-top: 3px; }
.tv { width: 50px; height: 50px; margin: 37px 96px 0 48px; }
.t1, .task svg { width: 75px; height: 74px; }
.t1 { margin: 25px 43px 0 0; }
.task { height: 124px; width: 151px; padding: 25px 0 0 37px; border-bottom: 7px solid #c1004f; }
.active.task { background: linear-gradient(90deg, #f5f0ec 136px, #b9a8a2 136px 140px, #efe6e2 140px); }
.task.ppt { width: 126px; margin-left: 17px; padding-left: 24px; }
.updown { width: 54px; height: 124px; margin-left: 950px; background: #f0f0f0; }
.wx { width: 66px; height: 50px; margin: 40px 31px 0 73px; }
.temp { font-size: 43px; width: 136px; line-height: 60px; padding-top: 37px; letter-spacing: -1px; }
.tray { width: 430px; height: 66px; margin-top: 29px; }
.clock-text { width: 237px; text-align: center; display: flex; flex-direction: column; gap: 12px; padding-top: 13px; line-height: 46px; letter-spacing: .2px; }
.notif { width: 135px; height: 124px; margin-left: 28px; }
```
FILE: scene.js
```js
const BLUE = '#5b93e6';
const line = (x1, y1, x2, y2, c, w = 2.5) =>
  `<path d="M${x1} ${y1}L${x2} ${y2}" stroke="${c}" stroke-width="${w}" fill="none"/>`;
const text = (x, y, s, c, size, extra = '') =>
  `<text x="${x}" y="${y}" fill="${c}" font-size="${size}" ${extra}>${s}</text>`;
const axis = (x, y, s, c) => text(x, y + 11, s, c, 33, 'text-anchor="middle" stroke-width=".8" stroke="' + c + '"');

function frame(x, y, fill, border, w = 1303) {
  return `<rect x="${x}" y="${y}" width="${w}" height="821" fill="${border}"/>` +
    `<rect x="${x + 4}" y="${y + 4}" width="${w - 8}" height="813" fill="${fill}"/>`;
}

function grid(x, y, cx, cy, w = 1303) {
  let s = '';
  const r = x + w - 4;
  for (let i = -25; i <= 25; i++) {
    const gx = cx + i * 57.25, gy = cy + i * 57.25;
    if (i && gx > x + 4 && gx < r) s += line(gx, y + 4, gx, y + 817, '#555', 3);
    if (i && gy > y + 4 && gy < y + 817) s += line(x + 4, gy, r, gy, '#555', 3);
  }
  return s + line(x + 4, cy, r, cy, '#000', 2.5) + line(cx, y + 4, cx, y + 817, '#000', 2.5);
}

function table(cx, floor) {
  const top = floor - 421, low = floor - 402;
  let s = `<rect x="${cx - 171}" y="${top}" width="342" height="${low - top}" fill="none" stroke="${BLUE}" stroke-width="3"/>`;
  for (let k = 1; k < 30; k++) {
    const x = cx + 171 * Math.cos(k * Math.PI / 30);
    s += line(x, top, x, low, BLUE, 2);
  }
  for (const d of [-16.5, -8.5, -3.5, 3, 7.5, 12.5, 17.5]) s += line(cx + d, low, cx + d, floor - 2, BLUE, d < -14 ? 5.5 : 2.2);
  return s + line(cx - 101, floor - 1, cx + 101, floor - 1, BLUE, 4.5);
}

const SMALL = 'text-anchor="middle" font-weight="700" style="font-family:Liberation Sans"';
function sideCube(cx, cy, label) {
  return `<ellipse cx="${cx}" cy="${cy + 34}" rx="74" ry="6" fill="none" stroke="#9a9da3" stroke-width="4" stroke-dasharray="22 3" opacity=".8"/>` +
    `<rect x="${cx - 32}" y="${cy - 32}" width="64" height="64" fill="#8b8b8b"/><rect x="${cx - 20}" y="${cy - 20}" width="40" height="40" fill="#83868a"/>` +
    text(cx, cy + 6, label, '#5d646d', 14, SMALL);
}
// Viewport caption: each bracketed menu has its own start and end
const label = (y, parts) => parts.map(([x, end, s]) =>
  text(x, y, s, '#d4d4d4', 35, `textLength="${end - x}" lengthAdjust="spacingAndGlyphs"`)).join('');
const put = (id, s) => { document.getElementById(id).innerHTML = s; };
const compass = (x, y, s) => text(x, y + 10, s, '#a8abb0', 26, SMALL);

put('vTop', frame(757, 377, 'url(#gView)', '#333', 1301) +
  `<g fill="none" stroke="${BLUE}" stroke-width="2.5"><circle cx="1421.5" cy="759.4" r="171.5"/><path d="M1321 659H1522V859H1321Z"/><circle cx="1421.5" cy="759.4" r="17.5"/></g>` +
  label(427, [[769, 825, '[ + ]'], [838, 926, '[Top ]'], [943, 1113, '[Standard ]'], [1128, 1320, '[Wireframe ]']]) +
  '<circle cx="1942" cy="494" r="62" fill="#222" stroke="#74777d" stroke-width="13"/><circle cx="1942" cy="494" r="53" fill="none" stroke="#43474b" stroke-width="3"/>' +
  '<rect x="1910" y="462" width="64" height="64" fill="#8b8b8b"/><rect x="1922" y="474" width="40" height="40" fill="#7e8084"/>' +
  text(1942, 500, 'TOP', '#5d646d', 15, SMALL) +
  compass(1942, 426, 'N') + compass(1942, 561, 'S') + compass(1874, 494, 'W') + compass(2010, 494, 'E') +
  line(812, 1091, 812, 1142, '#008a00') + line(824, 1141, 868, 1141, '#c00000', 3) +
  axis(820, 1081, 'y', '#00a000') + axis(820, 1133, 'z', '#0000c8') + axis(872, 1133, 'x', '#c00000'));

put('vFront', frame(2067, 377, '#333', '#2f2f2f') + grid(2067, 377, 2733.4, 1032) + table(2733.4, 1032) +
  label(427, [[2079, 2135, '[ + ]'], [2147, 2265, '[Front ]'], [2281, 2451, '[Standard ]'], [2465, 2659, '[Wireframe ]']]) + sideCube(3253, 494, 'FRONT') +
  line(2121, 1091, 2121, 1142, '#0000b8', 3) + line(2133, 1141, 2176, 1141, '#c00000', 3) +
  axis(2130, 1081, 'z', '#0000c8') + axis(2130, 1133, 'y', '#00a000') + axis(2181, 1133, 'x', '#c00000') +
  text(2354, 1011, '202114110', '#ffc000', 83, 'textLength="412" lengthAdjust="spacingAndGlyphs" style="font-family:Liberation Sans"') +
  text(2790, 1011, '조예나', '#ffc000', 86, 'textLength="248" lengthAdjust="spacingAndGlyphs" style="font-family:Noto Sans CJK KR"'));

put('vLeft', frame(757, 1207, '#333', '#2f2f2f', 1301) + grid(757, 1207, 1374, 1862, 1301) + table(1374, 1862) +
  label(1256, [[769, 825, '[ + ]'], [836, 931, '[Left ]'], [948, 1118, '[Standard ]'], [1132, 1326, '[Wireframe ]']]) + sideCube(1942, 1324, 'LEFT') +
  line(812, 1921, 812, 1971, '#0000b8', 3) + line(778, 1970, 812, 1970, '#008a00') +
  axis(820, 1911, 'z', '#0000c8') + axis(770, 1962, 'y', '#00a000') + axis(820, 1962, 'x', '#c00000'));

// Perspective: table rim, leg and base plate
let p = frame(2067, 1207, 'url(#gView)', '#806a26');
const pt = (e, a) => [e[0] + e[2] * Math.cos(a), e[1] + e[3] * Math.sin(a)];
const wire = (a, b, n, w) => {
  let s = `<g fill="none" stroke="${BLUE}" stroke-width="2.500"><ellipse cx="${a[0]}" cy="${a[1]}" rx="${a[2]}" ry="${a[3]}"/><ellipse cx="${b[0]}" cy="${b[1]}" rx="${b[2]}" ry="${b[3]}"/></g>`;
  for (let k = 0; k < n; k++) {
    const t = (k + .3) * 2 * Math.PI / n, u = pt(a, t), v = pt(b, t);
    s += line(u[0], u[1], v[0], v[1], BLUE, w);
  }
  return s;
};
p += wire([2756, 1427, 235, 102], [2756, 1449, 232, 103], 60, 1.8);
p += wire([2755.3, 1436, 24, 11], [2749.4, 1850, 20, 13.5], 18, 2.2);
p += `<path d="M2609 1807L2809 1761L2903 1898L2679 1956Z" fill="none" stroke="${BLUE}" stroke-width="3"/>` +
  line(2609, 1809, 2809, 1763, BLUE, 3) + line(2679, 1957.5, 2903, 1899.5, BLUE, 3);
p += label(1256, [[2079, 2135, '[ + ]'], [2147, 2357, '[Perspective ]'], [2374, 2545, '[Standard ]'], [2558, 2752, '[Wireframe ]']]) +
  '<ellipse cx="3253.6" cy="1354" rx="66" ry="40" fill="#262626" stroke="#74777d" stroke-width="12"/>' +
  '<path d="M3217 1289L3270 1281L3292 1310L3290 1356L3235 1367L3220 1328Z" fill="#8b8b8b"/><path d="M3217 1289L3230 1319L3292 1310M3230 1319L3235 1367" fill="none" stroke="#777"/>' +
  text(3263, 1345, 'FRONT', '#5d646d', 14, SMALL + ' transform="rotate(-8 3263 1345)"') +
  text(3254, 1304, 'TOP', '#5d646d', 11, SMALL) +
  compass(3184, 1365, 'W') + compass(3281, 1396, 'S') + compass(3316, 1337, 'E') +
  line(2121, 1928, 2121, 1971, '#0000b8', 3) + line(2111, 1953, 2121, 1971, '#008a00') + line(2121, 1971, 2168, 1961, '#c00000', 3) +
  axis(2129, 1918, 'z', '#0000c8') + axis(2113, 1938, 'y', '#00a000') + axis(2177, 1953, 'x', '#c00000');
put('vPersp', p);

// Track bar: one tick per frame, numbered every five
let t = '<rect x="183" y="2110" width="3622" height="74" fill="#292929"/><rect x="187" y="2111" width="23" height="72" fill="#7d7420" stroke="#222" stroke-width="2"/>';
for (let f = 0; f <= 100; f++) {
  const x = 198.7 + f * 35.909;
  t += line(x, 2107, x, f % 5 ? 2143 : 2147, '#777', 2);
  if (f % 5 === 0) {
    t += line(x, 2176, x, 2184, '#777', 2);
    t += text(x - 1, 2175, f, f ? '#bdbdbd' : '#d8d060', 34, `text-anchor="middle" font-family="Open Sans, sans-serif" textLength="${String(f).length * 18.4}" lengthAdjust="spacingAndGlyphs"`);
  }
}
put('ticks', t);
```
